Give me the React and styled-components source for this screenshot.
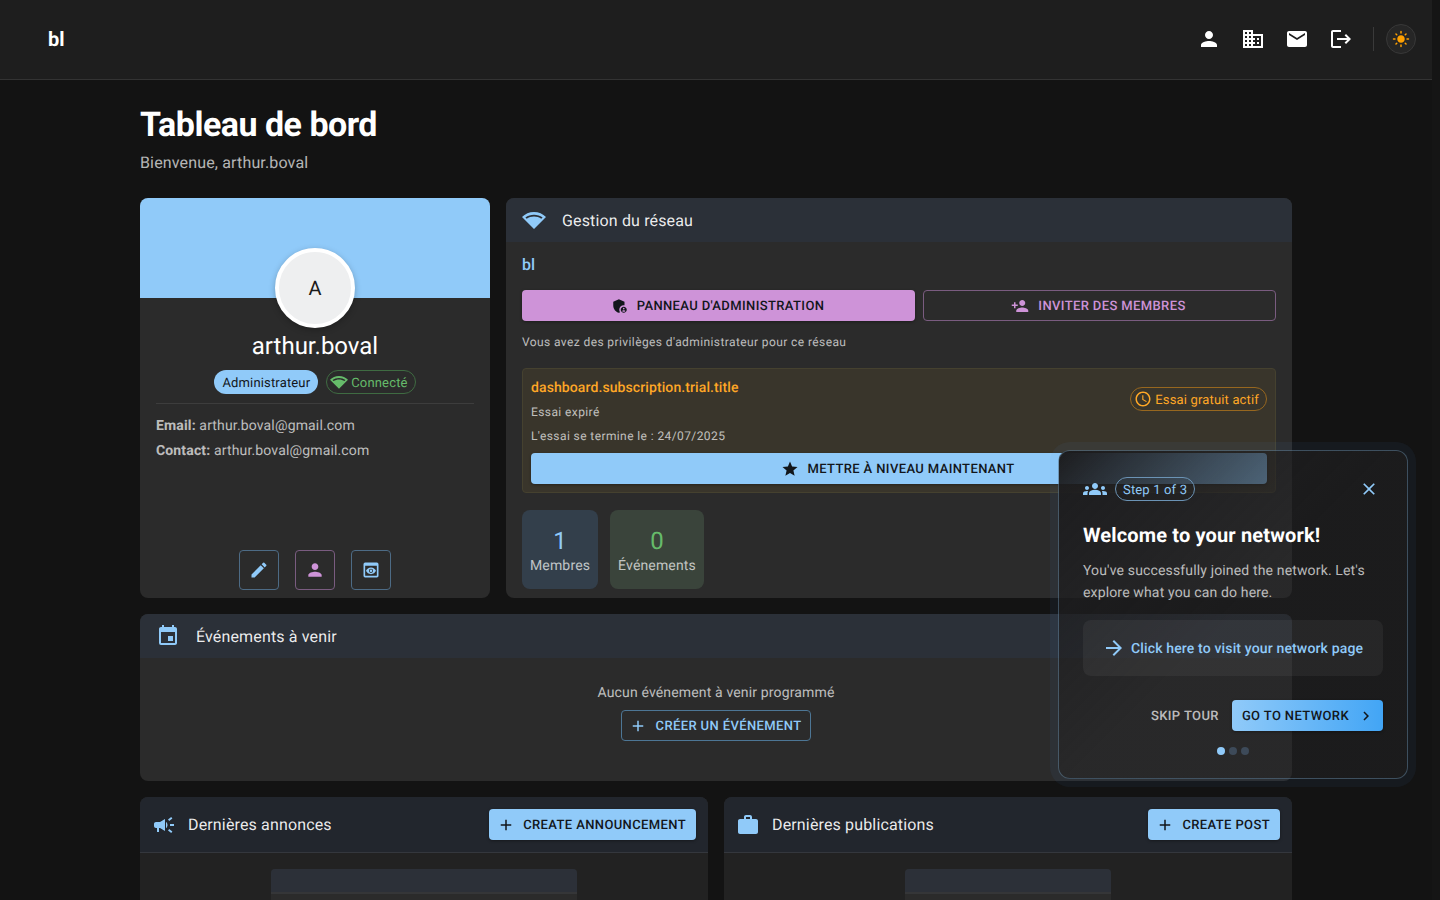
import React from "react";
import styled, { createGlobalStyle } from "styled-components";
import {
  MdPerson,
  MdBusiness,
  MdEmail,
  MdLogout,
  MdLightMode,
  MdAdminPanelSettings,
  MdPersonAdd,
  MdStar,
  MdAccessTime,
  MdGroups,
  MdClose,
  MdArrowForward,
  MdChevronRight,
  MdEdit,
  MdPreview,
  MdEvent,
  MdCampaign,
  MdWork,
  MdAdd,
} from "react-icons/md";

const GlobalStyle = createGlobalStyle`
  html, body {
    margin: 0;
    padding: 0;
    height: 100%;
    overflow: hidden;
    background: #131313;
  }
  body {
    font-family: Roboto, "Liberation Sans", sans-serif;
    color: #fff;
    text-rendering: geometricPrecision;
  }
  * {
    box-sizing: border-box;
  }
`;

const WifiIcon = () => (
  <svg width="1em" height="1em" viewBox="0 0 24 24" fill="currentColor">
    <path
      fillRule="evenodd"
      d="M12 4C7.31 4 3.07 5.9 0 8.98L12 21 24 8.98C20.93 5.9 16.69 4 12 4zM3.4 9.4C5.8 7.6 8.8 6.7 12 6.7s6.2.9 8.6 2.7l-1.3 1.3C17.2 9.3 14.7 8.5 12 8.5s-5.2.8-7.3 2.2L3.4 9.4z"
    />
  </svg>
);

const Page = styled.div`
  position: relative;
  display: flex;
  height: 900px;
  overflow: hidden;
  background: #131313;
`;

const Viewport = styled.div`
  width: 1432px;
  flex: none;
`;

const Gutter = styled.div`
  width: 8px;
  flex: none;
  background: #151515;
`;

// top bar
const TopBar = styled.header`
  display: flex;
  align-items: center;
  height: 80px;
  padding: 0 16px 1px 48px;
  background: #1e1e1e;
  border-bottom: 1px solid #333;
`;

const Logo = styled.div`
  font-size: 20px;
  font-weight: 700;
  flex: 1;
`;

const NavButton = styled.div`
  display: flex;
  align-items: center;
  justify-content: center;
  width: 40px;
  height: 40px;
  margin: 0 2px;
  font-size: 24px;
  color: #fff;
`;

const NavDivider = styled.div`
  width: 1px;
  height: 24px;
  margin: 0 12px 0 10px;
  background: #3a3a3a;
`;

const ThemeButton = styled.div`
  display: flex;
  align-items: center;
  justify-content: center;
  width: 30px;
  height: 30px;
  border-radius: 50%;
  border: 1px solid #383838;
  background: #262626;
  color: #ffa000;
  font-size: 18px;
`;

// page content
const Content = styled.main`
  width: 1152px;
  margin: 0 auto;
  padding-top: 24px;
`;

const Title = styled.h1`
  margin: 0 0 5px;
  font-size: 34px;
  line-height: 42px;
  font-weight: 700;
  letter-spacing: -0.5px;
`;

const Subtitle = styled.div`
  font-size: 16px;
  line-height: 24px;
  color: rgba(255, 255, 255, 0.7);
  letter-spacing: 0.15px;
  margin-bottom: 23px;
`;

const TopGrid = styled.div`
  display: grid;
  grid-template-columns: 350px 786px;
  gap: 16px;
  margin-bottom: 16px;
`;

const BottomGrid = styled.div`
  display: grid;
  grid-template-columns: 568px 568px;
  gap: 16px;
  margin-top: 16px;
`;

const Card = styled.section`
  display: flex;
  flex-direction: column;
  background: #2b2b2b;
  border-radius: 8px;
  overflow: hidden;
`;

// profile card
const ProfileCard = styled(Card)`
  height: 400px;
`;

const Banner = styled.div`
  height: 100px;
  background: #90caf9;
`;

const ProfileBody = styled.div`
  flex: 1;
  display: flex;
  flex-direction: column;
  padding: 0 16px 8px;
`;

const Avatar = styled.div`
  display: flex;
  align-items: center;
  justify-content: center;
  width: 80px;
  height: 80px;
  margin: -50px auto 0;
  border-radius: 50%;
  border: 4px solid #fff;
  background: #eeeff0;
  color: #1a1a1a;
  font-size: 20px;
  box-shadow: 0 2px 6px rgba(0, 0, 0, 0.25);
`;

const Name = styled.div`
  margin-top: 3px;
  text-align: center;
  font-size: 24px;
  line-height: 30px;
`;

const ChipRow = styled.div`
  display: flex;
  justify-content: center;
  gap: 8px;
  margin-top: 9px;
`;

const Chip = styled.div`
  display: inline-flex;
  align-items: center;
  gap: 3px;
  height: 24px;
  padding: ${(props) => props.$pad || "0 8px"};
  padding-top: 2px;
  border-radius: 12px;
  font-size: 13px;
  letter-spacing: 0.16px;
  white-space: nowrap;
  color: ${(props) => props.$color || "#fff"};
  background: ${(props) => props.$bg || "transparent"};
  border: ${(props) => (props.$line ? `1px solid ${props.$line}` : "none")};
  margin-top: ${(props) => props.$top || "0"};
  svg {
    font-size: 18px;
    flex: none;
    margin-top: -2px;
  }
`;

const Rule = styled.div`
  height: 1px;
  margin: 9px 0 12px;
  background: #3d3d3d;
`;

const Info = styled.div`
  font-size: 14px;
  line-height: 20px;
  margin-bottom: 5px;
  color: rgba(255, 255, 255, 0.7);
  letter-spacing: 0.15px;
  b {
    font-weight: 700;
  }
`;

const ActionRow = styled.div`
  display: flex;
  justify-content: center;
  gap: 16px;
  margin-top: auto;
`;

const ActionButton = styled.div`
  display: flex;
  align-items: center;
  justify-content: center;
  width: 40px;
  height: 40px;
  border-radius: 4px;
  font-size: 20px;
  color: ${(props) => props.$color};
  border: 1px solid ${(props) => props.$line};
`;

// card headers
const CardHeader = styled.div`
  display: flex;
  align-items: center;
  height: 44px;
  padding: 0 16px;
  background: #2b3038;
  font-size: 16px;
  letter-spacing: 0.15px;
  color: rgba(255, 255, 255, 0.92);
  svg {
    font-size: 24px;
    color: #90caf9;
    margin-right: 16px;
    flex: none;
  }
`;

const FeedHeader = styled.div`
  display: flex;
  align-items: center;
  height: 56px;
  padding: 0 12px;
  background: #22262d;
  border-bottom: 1px solid #34373d;
  font-size: 16px;
  letter-spacing: 0.15px;
  color: rgba(255, 255, 255, 0.92);
  > svg {
    font-size: 24px;
    color: #90caf9;
    margin-right: 12px;
    flex: none;
  }
  > span {
    flex: 1;
  }
`;

// network card
const NetworkBody = styled.div`
  padding: 13px 16px 9px;
`;

const NetworkName = styled.div`
  font-size: 16px;
  line-height: 20px;
  font-weight: 500;
  color: #90caf9;
  margin-bottom: 15px;
`;

const ButtonRow = styled.div`
  display: grid;
  grid-template-columns: 393px 353px;
  gap: 8px;
`;

const Button = styled.div`
  display: inline-flex;
  align-items: center;
  justify-content: center;
  gap: ${(props) => (props.$line ? "9px" : "8px")};
  height: 31px;
  padding: ${(props) => (props.$line ? "2px 9px 0 7px" : "2px 10px 0 8px")};
  border-radius: 4px;
  font-size: 13px;
  font-weight: 500;
  letter-spacing: 0.38px;
  white-space: nowrap;
  color: ${(props) => props.$color};
  background: ${(props) => props.$bg || "transparent"};
  border: ${(props) => (props.$line ? `1px solid ${props.$line}` : "none")};
  box-shadow: ${(props) =>
    props.$bg ? "0 1px 3px rgba(0, 0, 0, 0.35)" : "none"};
  svg {
    font-size: 18px;
    flex: none;
    margin-top: -2px;
  }
`;

const Note = styled.div`
  margin: 12px 0 17px;
  font-size: 12px;
  line-height: 18px;
  letter-spacing: 0.4px;
  color: rgba(255, 255, 255, 0.7);
`;

const TrialBox = styled.div`
  height: 125px;
  padding: 8px;
  border-radius: 4px;
  background: #39352b;
  border: 1px solid #45412f;
`;

const TrialTop = styled.div`
  display: flex;
  justify-content: space-between;
  align-items: flex-start;
  height: 76px;
`;

const TrialInfo = styled.div`
  padding-top: 1px;
`;

const TrialTitle = styled.div`
  font-size: 14px;
  line-height: 20px;
  font-weight: 500;
  color: #ffa726;
  letter-spacing: 0.1px;
  margin-bottom: 4px;
`;

const TrialText = styled.div`
  font-size: 12px;
  line-height: 20px;
  letter-spacing: 0.4px;
  color: rgba(255, 255, 255, 0.7);
  margin-bottom: 4px;
`;

const UpgradeButton = styled(Button)`
  display: flex;
`;

const StatRow = styled.div`
  display: flex;
  gap: 12px;
  margin-top: 17px;
`;

const Stat = styled.div`
  padding: 16px 8px 13px;
  border-radius: 8px;
  text-align: center;
  background: ${(props) => props.$bg};
`;

const StatValue = styled.div`
  font-size: 24px;
  line-height: 30px;
  color: ${(props) => props.$color};
`;

const StatLabel = styled.div`
  font-size: 14px;
  line-height: 20px;
  letter-spacing: 0.15px;
  color: rgba(255, 255, 255, 0.7);
`;

// events
const EventBody = styled.div`
  display: flex;
  flex-direction: column;
  align-items: center;
  height: 123px;
  padding-top: 25px;
`;

const EmptyText = styled.div`
  font-size: 14px;
  line-height: 20px;
  letter-spacing: 0.15px;
  color: rgba(255, 255, 255, 0.7);
  margin-bottom: 7px;
`;

// feeds
const FeedCard = styled(Card)`
  height: 200px;
`;

const FeedBody = styled.div`
  display: flex;
  justify-content: center;
  padding-top: 16px;
  flex: 1;
  background: #222;
`;

const Skeleton = styled.div`
  width: ${(props) => props.$width};
  height: 100px;
  border-radius: 4px 4px 0 0;
  background: #2b2b2b;
  overflow: hidden;
`;

const SkeletonTop = styled.div`
  height: 25px;
  background: #2c3038;
  border-bottom: 2px solid #353638;
`;

// guided tour
const TourCard = styled.aside`
  position: absolute;
  left: 1058px;
  top: 450px;
  width: 350px;
  height: 329px;
  padding: 24px;
  border-radius: 12px;
  border: 1px solid rgba(144, 202, 249, 0.3);
  background: linear-gradient(
    135deg,
    rgba(28, 28, 30, 1) 0%,
    rgba(38, 38, 40, 0.46) 50%,
    rgba(38, 38, 40, 0.46) 100%
  );
  box-shadow: 0 0 0 8px rgba(80, 150, 230, 0.06);
`;

const TourHead = styled.div`
  display: flex;
  align-items: center;
  gap: 8px;
  height: 28px;
  color: #90caf9;
  > svg {
    font-size: 24px;
    flex: none;
  }
`;

const CloseIcon = styled.div`
  display: flex;
  margin: 0 4px 0 auto;
  font-size: 20px;
  color: #90caf9;
`;

const TourTitle = styled.div`
  margin-top: 18px;
  font-size: 20px;
  line-height: 28px;
  font-weight: 700;
  letter-spacing: 0.15px;
`;

const TourText = styled.div`
  margin-top: 11px;
  font-size: 14px;
  line-height: 22px;
  letter-spacing: 0.15px;
  color: rgba(255, 255, 255, 0.7);
`;

const TourLink = styled.div`
  display: flex;
  align-items: center;
  gap: 5px;
  height: 56px;
  margin-top: 16px;
  padding: 2px 19px 0;
  border-radius: 8px;
  background: rgba(255, 255, 255, 0.05);
  color: #90caf9;
  font-size: 14px;
  font-weight: 500;
  letter-spacing: 0.15px;
  svg {
    font-size: 24px;
    flex: none;
    margin-top: -2px;
  }
`;

const TourActions = styled.div`
  display: flex;
  align-items: center;
  justify-content: flex-end;
  gap: 13px;
  margin-top: 24px;
`;

const SkipButton = styled.div`
  padding-top: 2px;
  font-size: 13px;
  font-weight: 500;
  letter-spacing: 0.4px;
  color: rgba(255, 255, 255, 0.7);
`;

const GoButton = styled(Button)`
  padding: 2px 8px 0 10px;
`;

const Dots = styled.div`
  display: flex;
  justify-content: center;
  gap: 4px;
  margin-top: 16px;
`;

const Dot = styled.div`
  width: 8px;
  height: 8px;
  border-radius: 50%;
  background: ${(props) => (props.$active ? "#90caf9" : "#3d4a59")};
`;

const dark = "#12161b";

const App = () => {
  return (
    <Page>
      <GlobalStyle />
      <Viewport>
        <TopBar>
          <Logo>bl</Logo>
          <NavButton>
            <MdPerson />
          </NavButton>
          <NavButton>
            <MdBusiness />
          </NavButton>
          <NavButton>
            <MdEmail />
          </NavButton>
          <NavButton>
            <MdLogout />
          </NavButton>
          <NavDivider />
          <ThemeButton>
            <MdLightMode />
          </ThemeButton>
        </TopBar>

        <Content>
          <Title>Tableau de bord</Title>
          <Subtitle>Bienvenue, arthur.boval</Subtitle>

          <TopGrid>
            <ProfileCard>
              <Banner />
              <ProfileBody>
                <Avatar>A</Avatar>
                <Name>arthur.boval</Name>
                <ChipRow>
                  <Chip $bg="#90caf9" $color={dark}>
                    Administrateur
                  </Chip>
                  <Chip $color="#66bb6a" $line="#3f6b42" $pad="0 7px 0 3px">
                    <WifiIcon />
                    Connecté
                  </Chip>
                </ChipRow>
                <Rule />
                <Info>
                  <b>Email:</b> arthur.boval@gmail.com
                </Info>
                <Info>
                  <b>Contact:</b> arthur.boval@gmail.com
                </Info>
                <ActionRow>
                  <ActionButton $color="#90caf9" $line="#4d6b85">
                    <MdEdit />
                  </ActionButton>
                  <ActionButton $color="#ce93d8" $line="#7a5c80">
                    <MdPerson />
                  </ActionButton>
                  <ActionButton $color="#90caf9" $line="#4d6b85">
                    <MdPreview />
                  </ActionButton>
                </ActionRow>
              </ProfileBody>
            </ProfileCard>

            <Card>
              <CardHeader>
                <WifiIcon />
                Gestion du réseau
              </CardHeader>
              <NetworkBody>
                <NetworkName>bl</NetworkName>
                <ButtonRow>
                  <Button $bg="#ce93d8" $color={dark}>
                    <MdAdminPanelSettings />
                    PANNEAU D'ADMINISTRATION
                  </Button>
                  <Button $color="#ce93d8" $line="#7a5c80">
                    <MdPersonAdd />
                    INVITER DES MEMBRES
                  </Button>
                </ButtonRow>
                <Note>Vous avez des privilèges d'administrateur pour ce réseau</Note>
                <TrialBox>
                  <TrialTop>
                    <TrialInfo>
                      <TrialTitle>dashboard.subscription.trial.title</TrialTitle>
                      <TrialText>Essai expiré</TrialText>
                      <TrialText>L'essai se termine le : 24/07/2025</TrialText>
                    </TrialInfo>
                    <Chip
                      $color="#ffa726"
                      $line="#97671f"
                      $pad="0 7px 0 3px"
                      $top="10px"
                    >
                      <MdAccessTime />
                      Essai gratuit actif
                    </Chip>
                  </TrialTop>
                  <UpgradeButton $bg="#90caf9" $color={dark}>
                    <MdStar />
                    METTRE À NIVEAU MAINTENANT
                  </UpgradeButton>
                </TrialBox>
                <StatRow>
                  <Stat $bg="#333f4b">
                    <StatValue $color="#90caf9">1</StatValue>
                    <StatLabel>Membres</StatLabel>
                  </Stat>
                  <Stat $bg="#3a443b">
                    <StatValue $color="#66bb6a">0</StatValue>
                    <StatLabel>Événements</StatLabel>
                  </Stat>
                </StatRow>
              </NetworkBody>
            </Card>
          </TopGrid>

          <Card>
            <CardHeader>
              <MdEvent />
              Événements à venir
            </CardHeader>
            <EventBody>
              <EmptyText>Aucun événement à venir programmé</EmptyText>
              <Button $color="#90caf9" $line="#4d7695">
                <MdAdd />
                CRÉER UN ÉVÉNEMENT
              </Button>
            </EventBody>
          </Card>

          <BottomGrid>
            <FeedCard>
              <FeedHeader>
                <MdCampaign />
                <span>Dernières annonces</span>
                <Button $bg="#90caf9" $color={dark}>
                  <MdAdd />
                  CREATE ANNOUNCEMENT
                </Button>
              </FeedHeader>
              <FeedBody>
                <Skeleton $width="306px">
                  <SkeletonTop />
                </Skeleton>
              </FeedBody>
            </FeedCard>
            <FeedCard>
              <FeedHeader>
                <MdWork />
                <span>Dernières publications</span>
                <Button $bg="#90caf9" $color={dark}>
                  <MdAdd />
                  CREATE POST
                </Button>
              </FeedHeader>
              <FeedBody>
                <Skeleton $width="206px">
                  <SkeletonTop />
                </Skeleton>
              </FeedBody>
            </FeedCard>
          </BottomGrid>
        </Content>
      </Viewport>
      <Gutter />

      <TourCard>
        <TourHead>
          <MdGroups />
          <Chip $color="#90caf9" $line="#6b93b5" $pad="0 7px">
            Step 1 of 3
          </Chip>
          <CloseIcon>
            <MdClose />
          </CloseIcon>
        </TourHead>
        <TourTitle>Welcome to your network!</TourTitle>
        <TourText>
          You've successfully joined the network. Let's explore what you can do
          here.
        </TourText>
        <TourLink>
          <MdArrowForward />
          Click here to visit your network page
        </TourLink>
        <TourActions>
          <SkipButton>SKIP TOUR</SkipButton>
          <GoButton $bg="linear-gradient(90deg, #90caf9, #42a5f5)" $color={dark}>
            GO TO NETWORK
            <MdChevronRight />
          </GoButton>
        </TourActions>
        <Dots>
          <Dot $active />
          <Dot />
          <Dot />
        </Dots>
      </TourCard>
    </Page>
  );
};

export default App;
